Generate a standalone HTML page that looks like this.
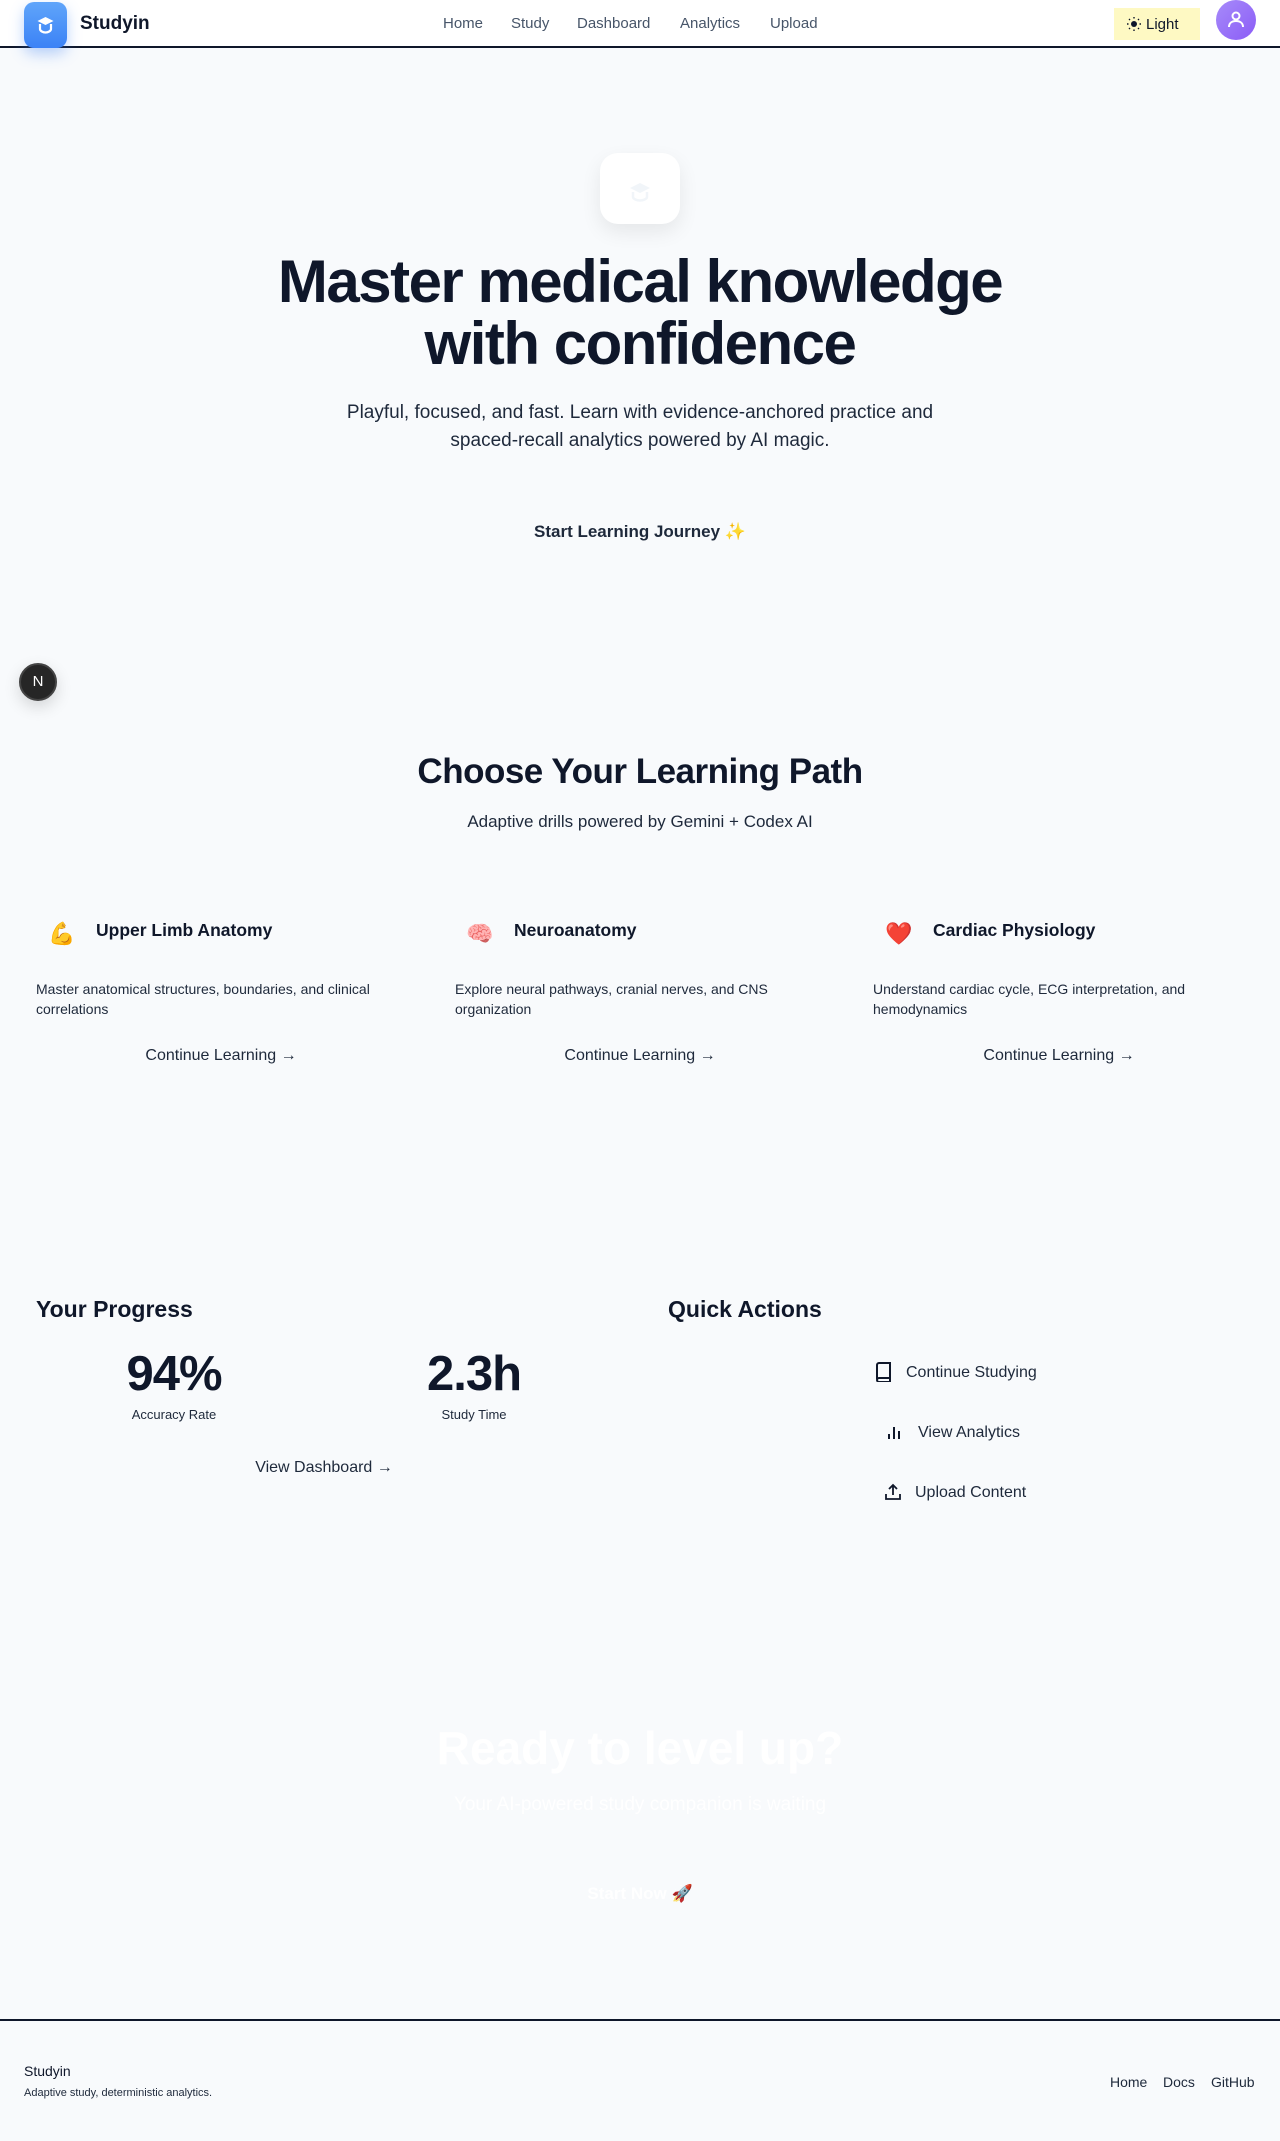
<!DOCTYPE html>
<html><head><meta charset="utf-8"><style>
*{margin:0;padding:0;box-sizing:border-box}
body{width:1280px;height:2141px;background:#f8fafc;font-family:"Liberation Sans",sans-serif;color:#0f172a;position:relative;overflow:hidden}
.a{position:absolute;white-space:nowrap}
.c{transform:translateX(-50%)}
header{position:absolute;left:0;top:0;width:1280px;height:48px;background:#fff;border-bottom:2px solid #0f172a}
.nav{color:#475569;font-size:15px;top:15px}
</style></head><body>
<header>
<div class="a" style="left:24px;top:2px;width:43px;height:46px;border-radius:10px;background:linear-gradient(#60a5fa,#3b82f6);box-shadow:0 6px 14px rgba(59,130,246,.35)">
<svg width="43" height="46" viewBox="0 0 43 46"><path d="M21.5 15l-8 4 8 4 8-4z" fill="#fff"/><path d="M16 22v5c0 2 3 3.5 5.5 3.5s5.5-1.5 5.5-3.5v-5" fill="none" stroke="#fff" stroke-width="2.2"/></svg></div>
<div class="a" style="left:80px;top:13px;font-size:19px;font-weight:bold">Studyin</div>
<div class="a nav" style="left:443px">Home</div>
<div class="a nav" style="left:511px">Study</div>
<div class="a nav" style="left:577px">Dashboard</div>
<div class="a nav" style="left:680px">Analytics</div>
<div class="a nav" style="left:770px">Upload</div>
<div class="a" style="left:1114px;top:8px;width:86px;height:32px;background:#fef9c3;font-size:15px;padding:8px 0 0 12px">
<svg width="16" height="16" viewBox="0 0 16 16" style="vertical-align:-3px;margin-right:4px"><circle cx="8" cy="8" r="3" fill="#0f172a"/><g stroke="#0f172a" stroke-width="1.4"><path d="M8 1v1.5M8 13.5V15M1 8h1.5M13.5 8H15M3 3l1 1M12 12l1 1M3 13l1-1M12 4l1-1"/></g></svg>Light</div>
<div class="a" style="left:1216px;top:0;width:40px;height:40px;border-radius:50%;background:linear-gradient(135deg,#a78bfa,#8b5cf6)">
<svg width="40" height="40" viewBox="0 0 40 40"><circle cx="20" cy="16" r="3.5" fill="none" stroke="#fff" stroke-width="2"/><path d="M13 27c0-4 3-6 7-6s7 2 7 6" fill="none" stroke="#fff" stroke-width="2"/></svg></div>
</header>
<div class="a" style="left:600px;top:153px;width:80px;height:71px;border-radius:18px;background:#fff;box-shadow:0 8px 20px rgba(0,0,0,.08)">
<svg width="80" height="71" viewBox="0 0 80 71"><path d="M40 30l-10 5 10 5 10-5z" fill="#f1f5f9"/><path d="M33 39v5c0 2 4 3.5 7 3.5s7-1.5 7-3.5v-5" fill="none" stroke="#f1f5f9" stroke-width="2.5"/></svg></div>
<div class="a c" style="left:640px;top:251px;text-align:center;font-size:60px;font-weight:bold;line-height:62px;letter-spacing:-1.5px;color:#0f172a">Master medical knowledge<br>with confidence</div>
<div class="a c" style="left:640px;top:399px;text-align:center;font-size:19px;line-height:28px;color:#1e293b">Playful, focused, and fast. Learn with evidence-anchored practice and<br>spaced-recall analytics powered by AI magic.</div>
<div class="a c" style="left:640px;top:522px;font-size:17px;font-weight:bold;color:#1e293b">Start Learning Journey <span style="color:#facc15">✨</span></div>
<div class="a" style="left:19px;top:663px;width:38px;height:38px;border-radius:50%;background:#262626;border:2px solid #444;color:#fff;font-size:15px;text-align:center;line-height:34px;box-shadow:0 6px 16px rgba(0,0,0,.15)">N</div>
<div class="a c" style="left:640px;top:752px;font-size:35px;font-weight:bold;letter-spacing:-0.5px">Choose Your Learning Path</div>
<div class="a c" style="left:640px;top:812px;font-size:17px;color:#1e293b">Adaptive drills powered by Gemini + Codex AI</div>

<div class="a" style="left:48px;top:921px;font-size:22px">💪</div>
<div class="a" style="left:96px;top:920px;font-size:17.5px;font-weight:bold">Upper Limb Anatomy</div>
<div class="a" style="left:36px;top:979px;font-size:14px;line-height:20px;color:#1e293b">Master anatomical structures, boundaries, and clinical<br>correlations</div>
<div class="a c" style="left:221px;top:1047px;font-size:16px;color:#1e293b">Continue Learning →</div>

<div class="a" style="left:466px;top:921px;font-size:22px">🧠</div>
<div class="a" style="left:514px;top:920px;font-size:17.5px;font-weight:bold">Neuroanatomy</div>
<div class="a" style="left:455px;top:979px;font-size:14px;line-height:20px;color:#1e293b">Explore neural pathways, cranial nerves, and CNS<br>organization</div>
<div class="a c" style="left:640px;top:1047px;font-size:16px;color:#1e293b">Continue Learning →</div>

<div class="a" style="left:885px;top:921px;font-size:22px;color:#dc2626">❤️</div>
<div class="a" style="left:933px;top:920px;font-size:17.5px;font-weight:bold">Cardiac Physiology</div>
<div class="a" style="left:873px;top:979px;font-size:14px;line-height:20px;color:#1e293b">Understand cardiac cycle, ECG interpretation, and<br>hemodynamics</div>
<div class="a c" style="left:1059px;top:1047px;font-size:16px;color:#1e293b">Continue Learning →</div>

<div class="a" style="left:36px;top:1296px;font-size:23px;font-weight:bold">Your Progress</div>
<div class="a c" style="left:174px;top:1346px;font-size:49px;font-weight:900;letter-spacing:-1px">94%</div>
<div class="a c" style="left:174px;top:1407px;font-size:13px;color:#1e293b">Accuracy Rate</div>
<div class="a c" style="left:474px;top:1346px;font-size:49px;font-weight:900;letter-spacing:-1px">2.3h</div>
<div class="a c" style="left:474px;top:1407px;font-size:13px;color:#1e293b">Study Time</div>
<div class="a c" style="left:324px;top:1459px;font-size:16px;color:#1e293b">View Dashboard →</div>

<div class="a" style="left:668px;top:1296px;font-size:23px;font-weight:bold">Quick Actions</div>
<svg class="a" style="left:875px;top:1362px" width="18" height="20" viewBox="0 0 18 20"><path d="M2 17V3a2 2 0 0 1 2-2h11v15H4a2 2 0 0 0-2 2 2 2 0 0 0 2 2h11v-4" fill="none" stroke="#0f172a" stroke-width="2"/></svg>
<div class="a" style="left:906px;top:1364px;font-size:16px;color:#1e293b">Continue Studying</div>
<svg class="a" style="left:886px;top:1424px" width="16" height="16" viewBox="0 0 16 16"><path d="M3 15V10M8 15V3M13 15V7" stroke="#0f172a" stroke-width="2"/></svg>
<div class="a" style="left:918px;top:1424px;font-size:16px;color:#1e293b">View Analytics</div>
<svg class="a" style="left:884px;top:1483px" width="18" height="18" viewBox="0 0 18 18"><path d="M9 12V2M5 6l4-4 4 4M2 11v5h14v-5" fill="none" stroke="#0f172a" stroke-width="1.8"/></svg>
<div class="a" style="left:915px;top:1484px;font-size:16px;color:#1e293b">Upload Content</div>

<div class="a c" style="left:640px;top:1721px;font-size:46px;font-weight:bold;color:#fff">Ready to level up?</div>
<div class="a c" style="left:640px;top:1794px;font-size:19px;color:#fff">Your AI-powered study companion is waiting</div>
<div class="a c" style="left:640px;top:1884px;font-size:17px;font-weight:bold;color:#fff">Start Now 🚀</div>

<div class="a" style="left:0;top:2019px;width:1280px;height:2px;background:#0f172a"></div>
<div class="a" style="left:24px;top:2063px;font-size:14px">Studyin</div>
<div class="a" style="left:24px;top:2087px;font-size:11px;color:#1e293b">Adaptive study, deterministic analytics.</div>
<div class="a" style="left:1110px;top:2074px;font-size:14px;color:#1e293b">Home</div>
<div class="a" style="left:1163px;top:2074px;font-size:14px;color:#1e293b">Docs</div>
<div class="a" style="left:1211px;top:2074px;font-size:14px;color:#1e293b">GitHub</div>
</body></html>
